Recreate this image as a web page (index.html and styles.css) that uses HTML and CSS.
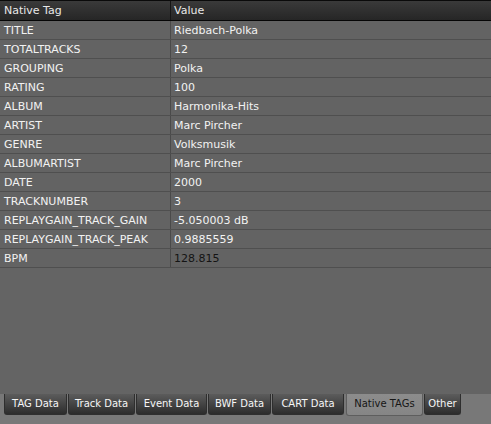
FILE: index.html
```html
<!DOCTYPE html>
<html>
<head>
<meta charset="utf-8">
<link rel="stylesheet" href="styles.css">
</head>
<body>
<div class="app">
  <div class="grid">
    <div class="row head">
      <div class="c1">Native Tag</div>
      <div class="c2">Value</div>
    </div>
    <div class="row"><div class="c1">TITLE</div><div class="c2">Riedbach-Polka</div></div>
    <div class="row"><div class="c1">TOTALTRACKS</div><div class="c2">12</div></div>
    <div class="row"><div class="c1">GROUPING</div><div class="c2">Polka</div></div>
    <div class="row"><div class="c1">RATING</div><div class="c2">100</div></div>
    <div class="row"><div class="c1">ALBUM</div><div class="c2">Harmonika-Hits</div></div>
    <div class="row"><div class="c1">ARTIST</div><div class="c2">Marc Pircher</div></div>
    <div class="row"><div class="c1">GENRE</div><div class="c2">Volksmusik</div></div>
    <div class="row"><div class="c1">ALBUMARTIST</div><div class="c2">Marc Pircher</div></div>
    <div class="row"><div class="c1">DATE</div><div class="c2">2000</div></div>
    <div class="row"><div class="c1">TRACKNUMBER</div><div class="c2">3</div></div>
    <div class="row"><div class="c1">REPLAYGAIN_TRACK_GAIN</div><div class="c2">-5.050003 dB</div></div>
    <div class="row"><div class="c1">REPLAYGAIN_TRACK_PEAK</div><div class="c2">0.9885559</div></div>
    <div class="row"><div class="c1">BPM</div><div class="c2 dark">128.815</div></div>
  </div>
  <div class="tabbar">
    <div class="tab t1">TAG Data</div>
    <div class="tab t2">Track Data</div>
    <div class="tab t3">Event Data</div>
    <div class="tab t4">BWF Data</div>
    <div class="tab t5">CART Data</div>
    <div class="tab t6 active">Native TAGs</div>
    <div class="tab t7">Other</div>
  </div>
</div>
</body>
</html>
```
FILE: styles.css
```css
html, body {
  margin: 0;
  padding: 0;
  background: #646464;
}
.app {
  width: 491px;
  height: 424px;
  display: flex;
  flex-direction: column;
  font-family: "DejaVu Sans", sans-serif;
  font-size: 11px;
  color: #f2f2f2;
  background: #646464;
  overflow: hidden;
}
.grid {
  flex: 1;
}
.row {
  display: flex;
  height: 18px;
  border-bottom: 1px solid #4f4f4f;
  line-height: 19px;
  background: #636363;
}
.row .c1 {
  width: 166px;
  padding-left: 4px;
  border-right: 1px solid #4a4a4a;
  white-space: nowrap;
}
.row .c2 {
  flex: 1;
  padding-left: 3px;
  white-space: nowrap;
}
.row .c2.dark {
  color: #141414;
}
.row.head {
  height: 19px;
  line-height: 20px;
  border-top: 1px solid #0a0a0a;
  border-bottom: 1px solid #050505;
  background: linear-gradient(#3a3a3a, #262626);
  color: #e8e8e8;
}
.row.head .c1 {
  border-right: 1px solid #151515;
}
.tabbar {
  height: 30px;
  flex: none;
  display: flex;
  align-items: flex-start;
  gap: 1px;
  padding-left: 4px;
  box-sizing: border-box;
  background: #787878;
}
.tab {
  height: 21px;
  line-height: 20px;
  font-size: 10px;
  text-align: center;
  border: 1px solid #2e2e2e;
  border-top: none;
  border-radius: 0 0 3px 3px;
  background: linear-gradient(#5c5c5c, #2c2c2c);
  color: #f6f6f6;
  white-space: nowrap;
  box-sizing: border-box;
}
.t1 { width: 63px; }
.t2 { width: 67px; }
.t3 { width: 71px; }
.t4 { width: 63px; }
.t5 { width: 72px; }
.t6 { width: 77px; margin-left: 1px; }
.t7 { width: 37px; }
.tab.active {
  height: 22px;
  background: linear-gradient(#8c8c8c, #868686);
  border-color: #5e5e5e;
  color: #161616;
}
```
